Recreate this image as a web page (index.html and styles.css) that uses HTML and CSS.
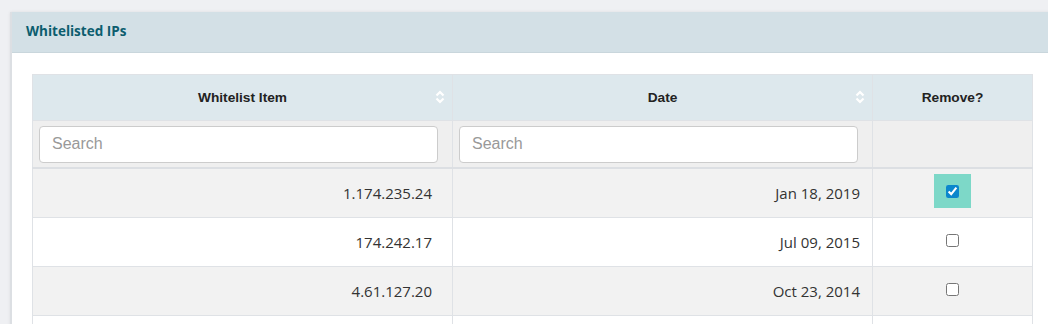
FILE: index.html
```html
<!DOCTYPE html>
<html lang="en">
<head>
    <meta charset="UTF-8">
    <title>Whitelisted IPs</title>
    <link rel="stylesheet" href="styles.css">
</head>
<body>
    <div class="panel">
        <div class="panel-heading">Whitelisted IPs</div>
        <div class="panel-body">
            <table class="wl-table">
                <thead>
                    <tr class="head-row">
                        <th class="col-item sortable">Whitelist Item
                            <svg class="sort-icon" viewBox="0 0 10 14" width="10" height="14"><path d="M1.5 5.5 5 2l3.5 3.5M1.5 8.5 5 12l3.5-3.5" fill="none" stroke="#fff" stroke-width="2.2"/></svg>
                        </th>
                        <th class="col-date sortable">Date
                            <svg class="sort-icon" viewBox="0 0 10 14" width="10" height="14"><path d="M1.5 5.5 5 2l3.5 3.5M1.5 8.5 5 12l3.5-3.5" fill="none" stroke="#fff" stroke-width="2.2"/></svg>
                        </th>
                        <th class="col-remove">Remove?</th>
                    </tr>
                    <tr class="filter-row">
                        <th><input class="search" type="text" placeholder="Search"></th>
                        <th><input class="search" type="text" placeholder="Search"></th>
                        <th></th>
                    </tr>
                </thead>
                <tbody>
                    <tr class="odd">
                        <td class="ip">1.174.235.24</td>
                        <td class="date">Jan 18, 2019</td>
                        <td class="remove"><span class="check-wrap selected"><input type="checkbox" checked></span></td>
                    </tr>
                    <tr>
                        <td class="ip">174.242.17</td>
                        <td class="date">Jul 09, 2015</td>
                        <td class="remove"><span class="check-wrap"><input type="checkbox"></span></td>
                    </tr>
                    <tr class="odd">
                        <td class="ip">4.61.127.20</td>
                        <td class="date">Oct 23, 2014</td>
                        <td class="remove"><span class="check-wrap"><input type="checkbox"></span></td>
                    </tr>
                    <tr>
                        <td class="ip">&nbsp;</td>
                        <td class="date">&nbsp;</td>
                        <td class="remove"></td>
                    </tr>
                </tbody>
            </table>
        </div>
    </div>
</body>
</html>
```

FILE: styles.css
```css
body {
    margin: 0;
    padding: 12px 0 0 10px;
    background-color: #eff0f3;
    font-family: "Open Sans", Arial, sans-serif;
    overflow: hidden;
}
.panel {
    width: 1060px;
    background-color: white;
    border-left: 2px solid #dcdfe3;
    box-shadow: 0 0 3px rgba(0, 0, 0, 0.08);
}
.panel-heading {
    background-color: #d3e0e6;
    height: 41px;
    line-height: 39px;
    padding-left: 14px;
    color: #0c5d6e;
    font-size: 13.5px;
    font-weight: 700;
    border-bottom: 1px solid #c9d6dc;
    box-sizing: border-box;
}
.panel-body {
    padding: 21px 0 0 20px;
}
.wl-table {
    width: 1001px;
    border-collapse: collapse;
    table-layout: fixed;
}
.wl-table th, .wl-table td {
    border: 1px solid #dfe2e6;
}
.col-item, .col-date {
    width: 419px;
}
.head-row th {
    background-color: #dde8ed;
    height: 45px;
    font-family: "Liberation Sans", Arial, sans-serif;
    font-size: 13.7px;
    font-weight: 700;
    color: #222;
    text-align: center;
    position: relative;
    padding: 0;
}
.sort-icon {
    position: absolute;
    right: 7px;
    top: 15px;
}
.filter-row th {
    background-color: #efefef;
    height: 46px;
    padding: 0 14px 0 6px;
    border-bottom: 2px solid #dcdfe3;
}
.search {
    width: 100%;
    height: 37px;
    box-sizing: border-box;
    border: 1px solid #ccc;
    border-radius: 4px;
    padding: 0 12px;
    font-family: "Liberation Sans", Arial, sans-serif;
    font-size: 16px;
    color: #333;
    background: white;
    display: block;
}
.search::placeholder {
    color: #999;
}
.wl-table td {
    height: 48px;
    padding: 0;
    font-size: 15px;
    color: #333;
    text-align: right;
}
.wl-table tr.odd td {
    background-color: #f2f2f2;
}
.ip {
    padding-right: 20px !important;
}
.date {
    padding-right: 12px !important;
}
.wl-table td.remove {
    text-align: center;
}
.check-wrap {
    display: inline-flex;
    align-items: center;
    justify-content: center;
    width: 37px;
    height: 34px;
    vertical-align: middle;
    margin-top: -4px;
}
.check-wrap.selected {
    background-color: #7dd8c8;
}
.check-wrap input {
    margin: 0;
    width: 13px;
    height: 13px;
    accent-color: #0b87cc;
}
```
